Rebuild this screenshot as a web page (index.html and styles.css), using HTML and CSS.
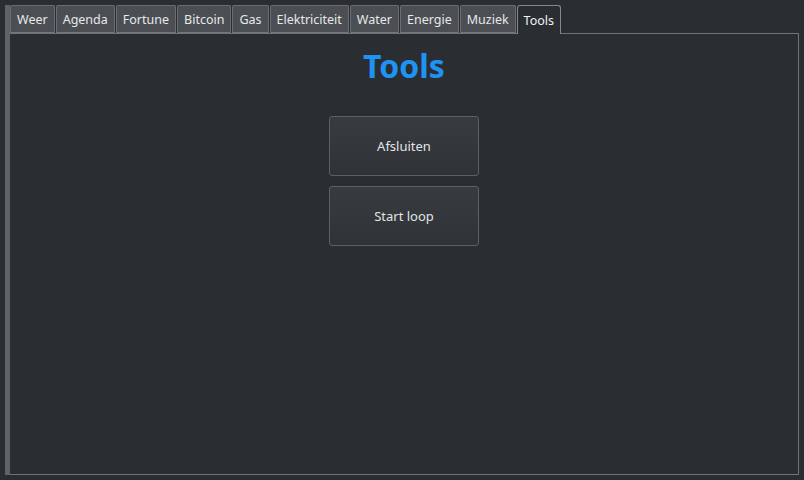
FILE: index.html
```html
<!DOCTYPE html>
<html>
<head>
<meta charset="utf-8">
<link rel="stylesheet" href="styles.css">
</head>
<body>
<div class="window">
  <div class="tabs">
    <div class="tab">Weer</div>
    <div class="tab">Agenda</div>
    <div class="tab">Fortune</div>
    <div class="tab">Bitcoin</div>
    <div class="tab">Gas</div>
    <div class="tab">Elektriciteit</div>
    <div class="tab">Water</div>
    <div class="tab">Energie</div>
    <div class="tab">Muziek</div>
    <div class="tab active">Tools</div>
  </div>
  <div class="pane">
    <h1 class="title">Tools</h1>
    <div class="buttons">
      <button class="btn">Afsluiten</button>
      <button class="btn">Start loop</button>
    </div>
  </div>
</div>
</body>
</html>
```
FILE: styles.css
```css
* { box-sizing: border-box; }
html, body {
  margin: 0;
  padding: 0;
  background: #2a2d32;
  width: 804px;
  height: 480px;
  overflow: hidden;
  font-family: "Noto Sans", "Open Sans", sans-serif;
}
.window {
  margin: 5px 5px 5px 5px;
  height: 470px;
  border-left: 5px solid #5f6366;
  display: flex;
  flex-direction: column;
}
.tabs {
  display: flex;
  height: 28px;
  gap: 1px;
  align-items: flex-end;
}
.tab {
  height: 28px;
  padding: 0 6px;
  display: flex;
  align-items: center;
  background: #4b4f53;
  border: 1px solid #6a6d70;
  border-bottom: 1px solid #75787b;
  color: #e6e8ea;
  font-size: 12.5px;
  border-radius: 2px 2px 0 0;
}
.tab.active {
  background: #2a2d32;
  border-color: #85888b;
  border-bottom: none;
  border-radius: 3px 3px 0 0;
  position: relative;
  height: 29px;
  margin-bottom: -1px;
  color: #f0f2f4;
}
.pane {
  flex: 1;
  border: 1px solid #707376;
  border-left: none;
  display: flex;
  flex-direction: column;
  align-items: center;
}
.title {
  margin: 13px 0 0 0;
  font-size: 32px;
  font-weight: 700;
  color: #1e93f2;
  line-height: 38px;
}
.buttons {
  margin-top: 31px;
  display: flex;
  flex-direction: column;
  gap: 10px;
}
.btn {
  width: 150px;
  height: 60px;
  border: 1px solid #5d6063;
  border-radius: 3px;
  background: linear-gradient(#383b3f, #2f3236);
  color: #e2e4e6;
  font-family: "Noto Sans", "Open Sans", sans-serif;
  font-size: 13px;
  padding: 0;
}
```
